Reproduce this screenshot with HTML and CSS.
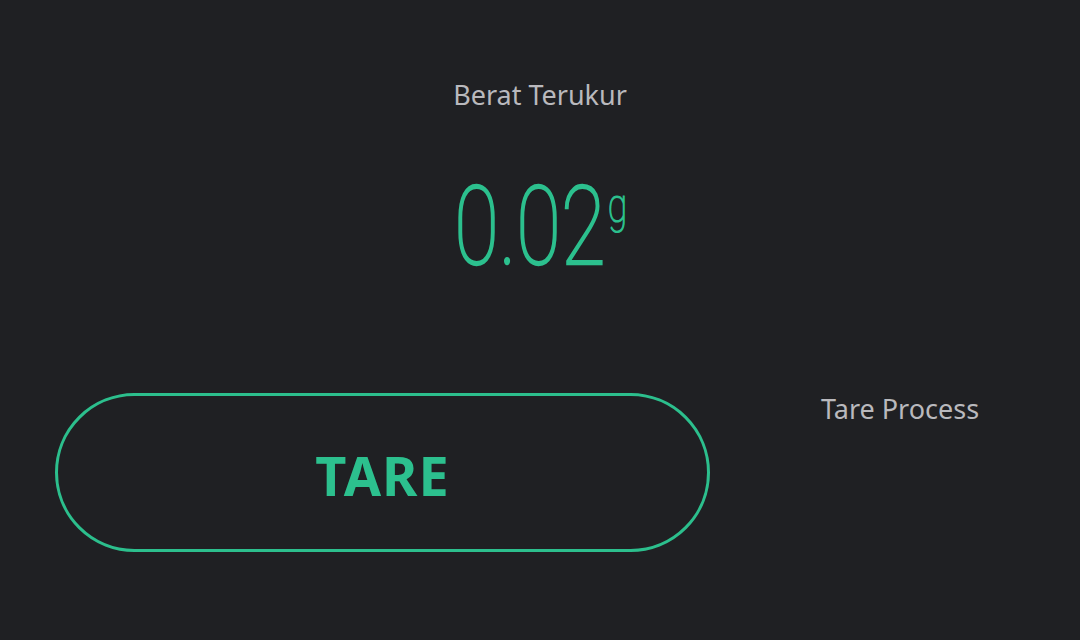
FILE: index.html
```html
<!DOCTYPE html>
<html>
<head>
<meta charset="utf-8">
<link rel="stylesheet" href="styles.css">
</head>
<body>
<div class="screen">
  <div class="top">
    <div class="label">Berat Terukur</div>
    <div class="reading"><span class="num">0.02<span class="unit">g</span></span></div>
  </div>
  <div class="row">
    <button class="tare">TARE</button>
    <div class="side">Tare Process</div>
  </div>
</div>
</body>
</html>
```
FILE: styles.css
```css
html, body {
  margin: 0;
  padding: 0;
  background: #1f2023;
}
.screen {
  width: 1080px;
  height: 640px;
  display: flex;
  flex-direction: column;
  font-family: "Noto Sans", "Open Sans", sans-serif;
}
.top {
  display: flex;
  flex-direction: column;
  align-items: center;
  padding-top: 76px;
}
.label {
  color: #b9b9bd;
  font-size: 27px;
  line-height: 38px;
}
.reading {
  margin-top: 53px;
  height: 120px;
  display: flex;
  justify-content: center;
}
.num {
  display: inline-block;
  font-family: Roboto, sans-serif;
  font-weight: 100;
  font-size: 110px;
  line-height: 120px;
  color: #2cc08e;
  transform: scaleX(0.74);
  -webkit-text-stroke: 2.3px #2cc08e;
  margin-left: 2px;
}
.unit {
  font-size: 48px;
  vertical-align: top;
  line-height: 78px;
  margin-left: 3px;
  -webkit-text-stroke: 1.2px #2cc08e;
}
.row {
  display: flex;
  align-items: flex-start;
  margin-top: 106px;
}
.tare {
  margin-left: 55px;
  width: 655px;
  height: 159px;
  border: 3px solid #2cbf8d;
  border-radius: 80px;
  background: transparent;
  color: #2cc08e;
  font-family: "Noto Sans", "Open Sans", sans-serif;
  font-weight: 700;
  font-size: 54px;
  letter-spacing: 1px;
  padding: 0;
  padding-top: 4px;
}
.side {
  flex: 1;
  text-align: center;
  color: #b9b9bd;
  font-size: 27px;
  line-height: 34px;
  margin-top: -1px;
  padding-left: 10px;
}
```
